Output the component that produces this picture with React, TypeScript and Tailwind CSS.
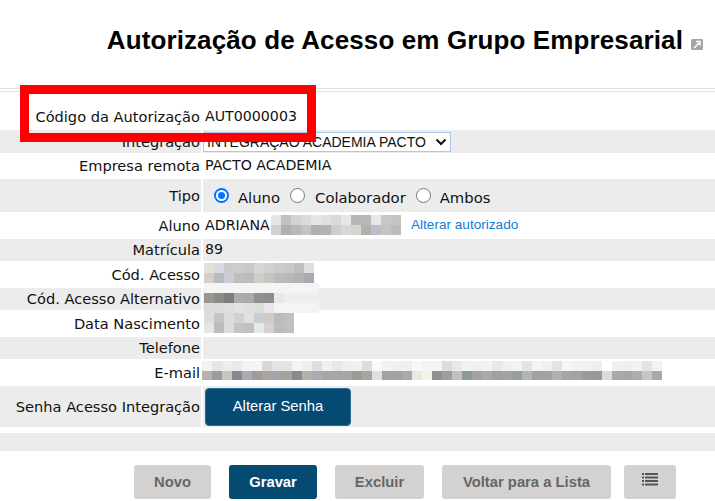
import { ReactNode } from "react";

const label = "flex items-center justify-end w-[201px] shrink-0 pr-[1px] text-[14.6px]";

// blurred personal data, drawn as a pixel mosaic
function Mosaic({ x, y, h = 10, w, rows }: { x: number; y: number; h?: number; w?: number; rows: string[] }) {
  const grid = rows.map((r) => r.split(" "));
  const cols = Math.max(...grid.map((r) => r.length));
  return (
    <svg className="absolute" style={{ left: x, top: y }} width={w ?? cols * 10} height={rows.length * h} shapeRendering="crispEdges">
      {grid.map((r, j) =>
        r.map((c, i) => <rect key={`${j}-${i}`} x={i * 10} y={j * h} width={10} height={h} fill={`#${c}`} />)
      )}
    </svg>
  );
}

function Row({ name, grey, h, top, children }: { name?: string; grey?: boolean; h: string; top?: string; children?: ReactNode }) {
  const bg = grey ? "bg-[#ececec]" : "bg-white";
  return (
    <div className={`flex gap-[2px] ${h}`}>
      <div className={`${label} ${bg} ${top ?? ""}`}>{name}</div>
      <div className={`flex flex-1 items-center ${bg}`}>{children}</div>
    </div>
  );
}

function Radio({ on }: { on?: boolean }) {
  return (
    <span
      className={
        on
          ? "block h-[15px] w-[15px] shrink-0 rounded-full border-2 border-[#0075ff] bg-white p-[2px]"
          : "block h-[15px] w-[15px] shrink-0 rounded-full border border-[#767676] bg-white"
      }
    >
      {on && <span className="block h-full w-full rounded-full bg-[#0075ff]" />}
    </span>
  );
}

const btn = "flex h-[34px] items-center justify-center rounded-[3px] text-[14.8px] font-bold";
const off = "bg-[#d3d2d0] text-[#666]";

export default function App() {
  return (
    <div className="relative h-[501px] w-[715px] overflow-hidden bg-white font-['DejaVu_Sans',sans-serif] text-[14.2px] text-[#111]">
      <div className="flex h-[88px] items-start justify-end pr-[12px] pt-[23px] font-['Liberation_Sans',sans-serif]">
        <h1 className="text-[26px] leading-[34px] font-bold tracking-[0.12px] text-black">Autorização de Acesso em Grupo Empresarial</h1>
        <svg className="ml-[8px] mt-[16px]" width="12" height="11" viewBox="0 0 12 11">
          <rect width="12" height="11" rx="1.5" fill="#a3a3a3" />
          <path d="M3 9 8 4M5 2.500h4v4" stroke="#fff" strokeWidth="1.600" fill="none" />
        </svg>
      </div>
      <div className="h-[4px] border-y border-[#e2e2e2]" />

      <Row name="Código da Autorização" h="h-[38px]" top="pt-[12px]">
        <span className="pl-[2px] pt-[12px]">AUT0000003</span>
      </Row>
      <Row name="Integração" grey h="h-[23px]">
        <span className="mt-[1px] flex h-[20px] w-[248px] items-center justify-between border border-[#a9c8ec] bg-white pl-[3px] pr-[3px] font-['Liberation_Sans',sans-serif] text-[14px]">
          INTEGRAÇÃO ACADEMIA PACTO
          <svg width="12" height="8" viewBox="0 0 12 8">
            <path d="M1.500 1.500 6 6l4.500-4.500" stroke="#111" strokeWidth="2" fill="none" />
          </svg>
        </span>
      </Row>
      <Row name="Empresa remota" h="h-[26px]">
        <span className="pl-[2px]">PACTO ACADEMIA</span>
      </Row>
      <Row name="Tipo" grey h="h-[33px]">
        <div className="flex items-center pl-[11px] text-[14.8px]">
          <Radio on />
          <span className="ml-[9px] pt-[6px]">Aluno</span>
          <span className="ml-[10px]"><Radio /></span>
          <span className="ml-[10px] pt-[6px]">Colaborador</span>
          <span className="ml-[10px]"><Radio /></span>
          <span className="ml-[9px] pt-[6px]">Ambos</span>
        </div>
      </Row>
      <Row name="Aluno" h="h-[27px]">
        <span className="pl-[2px]">ADRIANA</span>
        <a className="absolute left-[411px] top-[215px] font-['Liberation_Sans',sans-serif] text-[13.6px] text-[#0f7bd6]">Alterar autorizado</a>
      </Row>
      <Row name="Matrícula" grey h="h-[22px]">
        <span className="pl-[2px]">89</span>
      </Row>
      <Row name="Cód. Acesso" h="h-[27px]" />
      <Row name="Cód. Acesso Alternativo" grey h="h-[22px]" />
      <Row name="Data Nascimento" h="h-[27px]" />
      <Row name="Telefone" grey h="h-[22px]" />
      <Row name="E-mail" h="h-[27px]" />
      <Row name="Senha Acesso Integração" grey h="h-[41px]">
        <button className="ml-[2px] h-[38px] w-[146px] rounded-[4px] border border-[#2f6a92] bg-[#054a73] font-['Liberation_Sans',sans-serif] text-[14.8px] text-white">
          Alterar Senha
        </button>
      </Row>
      <div className="mt-[6px] h-[18px] bg-[#ececec]" />

      <div className="mt-[14px] flex pl-[134px] font-['Liberation_Sans',sans-serif]">
        <button className={`${btn} ${off} w-[77px]`}>Novo</button>
        <button className={`${btn} ml-[18px] w-[88px] bg-[#054a73] text-white`}>Gravar</button>
        <button className={`${btn} ${off} ml-[18px] w-[89px]`}>Excluir</button>
        <button className={`${btn} ${off} ml-[18px] w-[169px]`}>Voltar para a Lista</button>
        <button className={`${btn} ${off} ml-[13px] w-[52px] pb-[6px]`}>
          <svg width="16" height="13" viewBox="0 0 16 13" fill="#555">
            <path d="M0 0h2v2H0zM3 0h13v2H3zM0 3.500h2v2H0zM3 3.500h13v2H3zM0 7h2v2H0zM3 7h13v2H3zM0 10.500h2v2H0zM3 10.500h13v2H3z" />
          </svg>
        </button>
      </div>

      <Mosaic
        x={271}
        y={215}
        rows={[
          "e6e6e6 c4bfc0 d2d3d8 dcdad6 e6e6e6 e0e0e0 d8d8d8 e6e6ea b8b7b4 b8bab8 e6e6ec c8c8c8 c4c4c4",
          "d0d0cc b0b0b0 b8b8b8 c4c4c0 b0b0b0 b4b4b4 cccccc d8d8da d8d6cc b0b0ae bcbdc8 c4c4c4 bcbcbc",
        ]}
      />
      <Mosaic
        x={204}
        y={263}
        w={115}
        rows={[
          "e4e0d8 d8dae0 c8cad0 cccccc c8c8c6 d8d6d2 d0d0ce cccccc c8c8c8 c0bebb dce0e4",
          "d4d0c8 b8bac0 cccdd4 c0bebc bcbcbc d0ccca c4c4c0 bcbcbc b8b8b6 b4b2ae a8aab0",
          "f4f4f4 f4f4f4 f4f4f4 f4f4f4 f4f4f4 f4f4f4 f4f4f4 f4f4f4 f4f4f4 f4f4f4 f4f4f4 f4f4f4",
          "969696 8f8b84 7c7b80 a8acac aca8a6 8f8f92 8f8d8b e8e8ea eeeeee eeeeee eeeeee eeeeee",
          "dcdcdc dcdcdc e0dedc e0e2e4 e0dedc dcdedc e8e8ec f4f4f4 f4f4f4 f4f4f4 f4f4f4 f4f4f4",
          "dcdcde c4c4c4 e0dcda d0d2d4 e0e0dc c8ced2 d0cbc8 b8bcc0 c0c0c0",
          "e6e6e8 bcbcbc dcdcd8 c4c4c4 c0c0c4 e8eaea d4d2d0 bcbcbe c0c0c0",
        ]}
      />
      <Mosaic
        x={202}
        y={361}
        h={9.500}
        rows={[
          "f2f2f2 e8e4e0 ecedec e8eaec f4f4f4 f4f4f2 d8d8d8 e4e4e2 e4e4e0 f4f4f4 eeeeee dcdee0 f0f0f0 e8e8ea f0eef0 f0f0f2 e0dcd8 f8fafe f4f2f0 f0f0f0 eef0f0 faf8f4 f2f4f6 f4f4f4 dcdce0 e8e8e8 f2f2f2 f0f0f0 f2f2f2 e8e8e8 f2f0ee f2f4f2 e0e4e4 f4f4f0 f2f0ec e0e4e2 f6f6f6 f4f2f0 f2f2f0 eeeeee ffffff f0f0f0 eeeff0 f2f2f2 e4e4e2 f2f2f2",
          "b8b0aa 9a9c9c c4c6c0 88888e a8acb4 9c9c98 aba49e a0a4ac a0a49a 8c8a88 b0b0ae a8acb4 a8a6a2 a4a6aa a8a6a6 9c9a92 a6a4a4 e0e0e0 a0a2a6 a0a2a4 a8aaaa e8e8e8 f6f2e8 909090 9c9ca2 c4bfbc 8e9a98 a4a29c aca8aa a0a0a2 a4a09c 9a9c9e b0b6b6 a4a09c a0a2a4 acb2b4 aaa49c a0a4a8 9c9a96 98989a dcdcd8 a8aaac a4a8a8 aaaeb0 c8c6c2 aaa8ac",
        ]}
      />

      {/* highlight box drawn over the first row */}
      <div className="absolute left-[20px] top-[85px] h-[57px] w-[296px] border-[9px] border-[#ff0000]" />
    </div>
  );
}
